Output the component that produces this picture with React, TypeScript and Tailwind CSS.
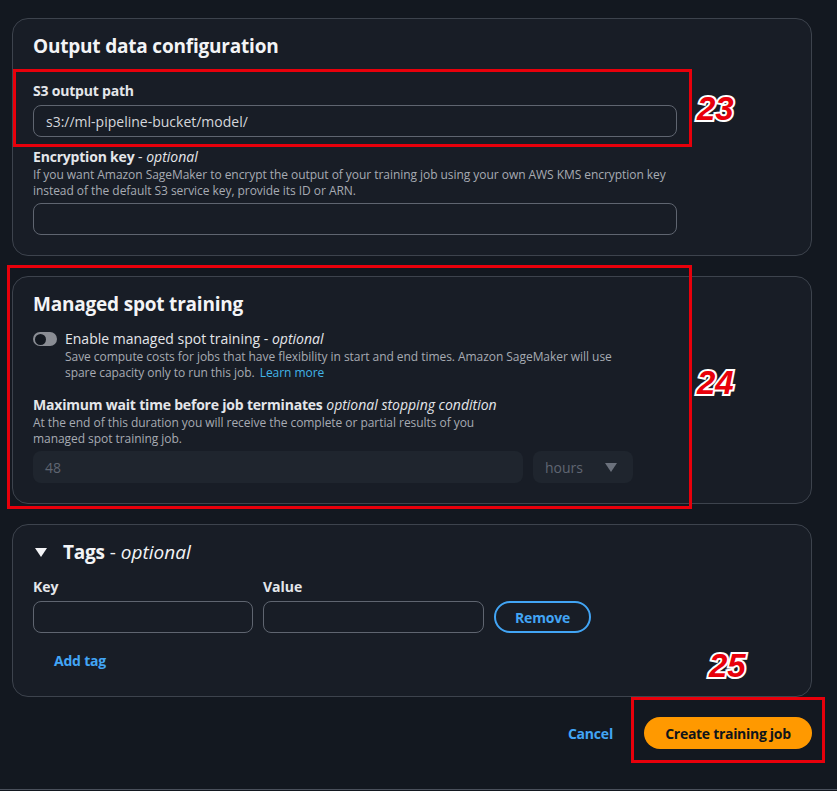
import React from 'react';

const font = "font-['Open_Sans','Liberation_Sans',sans-serif]";

const Card: React.FC<{ children: React.ReactNode; className?: string }> = ({ children, className }) => (
  <div className={`w-[800px] rounded-2xl border border-[#3d434d] bg-[#181d26] px-5 pt-[15px] pb-5 ${className ?? ''}`}>
    {children}
  </div>
);

const TextInput: React.FC<{ value?: string; className?: string }> = ({ value, className }) => (
  <div
    className={`flex h-8 items-center rounded-lg border border-[#5f6570] bg-[#181d26] px-3 text-[14px] text-[#d5d7dc] ${className ?? ''}`}
  >
    {value}
  </div>
);

const Marker: React.FC<{ n: string; className: string }> = ({ n, className }) => (
  <span
    className={`absolute text-[33px] font-bold italic leading-none text-[#e8000b] [-webkit-text-stroke:4px_#ffffff] [paint-order:stroke_fill] font-['Liberation_Sans',sans-serif] ${className}`}
  >
    {n}
  </span>
);

export default function App() {
  return (
    <div className={`relative h-[791px] w-full overflow-hidden bg-[#131820] ${font}`}>
      <div className="flex h-[790px] flex-col gap-5 border-b border-[#4a505b] pl-3 pt-[18px]">
        {/* Output data configuration */}
        <Card>
          <h2 className="text-[19px] font-bold leading-6 tracking-[-0.2px] text-[#f3f4f6]">Output data configuration</h2>
          <div className="mt-[23px] text-[14px] font-bold leading-5 tracking-[-0.2px] text-[#e4e6ea]">S3 output path</div>
          <TextInput value="s3://ml-pipeline-bucket/model/" className="mt-1 w-[644px]" />
          <div className="mt-[10px] text-[14px] leading-5 text-[#e4e6ea]">
            <span className="font-bold tracking-[-0.2px]">Encryption key</span> - <i>optional</i>
          </div>
          <p className="text-[12px] leading-4 tracking-[-0.05px] text-[#a7abb3]">
            If you want Amazon SageMaker to encrypt the output of your training job using your own AWS KMS encryption key
            <br />
            instead of the default S3 service key, provide its ID or ARN.
          </p>
          <TextInput className="mt-1 w-[644px]" />
        </Card>

        {/* Managed spot training */}
        <Card>
          <h2 className="text-[19px] font-bold leading-6 tracking-[-0.2px] text-[#f3f4f6]">Managed spot training</h2>
          <div className="mt-[13px] flex gap-2">
            <div className="mt-[3px] flex h-[14px] w-6 shrink-0 items-center rounded-full bg-[#8a8d94] px-[2px]">
              <div className="h-[11px] w-[11px] rounded-full bg-[#131820]" />
            </div>
            <div>
              <div className="text-[14px] leading-5 text-[#e4e6ea]">
                Enable managed spot training - <i>optional</i>
              </div>
              <p className="text-[12px] leading-4 tracking-[-0.05px] text-[#a7abb3]">
                Save compute costs for jobs that have flexibility in start and end times. Amazon SageMaker will use
                <br />
                spare capacity only to run this job. <span className="ml-0.5 text-[#42b4e8]">Learn more</span>
              </p>
            </div>
          </div>
          <div className="mt-[14px] text-[14px] leading-5 text-[#e4e6ea]">
            <span className="font-bold tracking-[-0.2px]">Maximum wait time before job terminates</span>{' '}
            <i>optional stopping condition</i>
          </div>
          <p className="text-[12px] leading-4 tracking-[-0.05px] text-[#a7abb3]">
            At the end of this duration you will receive the complete or partial results of you
            <br />
            managed spot training job.
          </p>
          <div className="mt-1 flex gap-[10px]">
            <div className="flex h-8 w-[490px] items-center rounded-lg bg-[#1f252e] px-3 text-[14px] text-[#5f6672]">48</div>
            <div className="flex h-8 w-[100px] items-center justify-between rounded-lg bg-[#1f252e] pl-3 pr-4 text-[14px] text-[#5f6672]">
              hours
              <svg width="12" height="9" viewBox="0 0 12 9">
                <path d="M0 0h12L6 9z" fill="#6b717c" />
              </svg>
            </div>
          </div>
        </Card>

        {/* Tags */}
        <Card>
          <div className="flex items-center gap-4 text-[19px] leading-6 text-[#f3f4f6]">
            <svg width="12" height="9" viewBox="0 0 12 9" className="ml-[2px]">
              <path d="M0 0h12L6 9z" fill="#f3f4f6" />
            </svg>
            <div>
              <span className="font-bold tracking-[-0.2px]">Tags</span> - <i>optional</i>
            </div>
          </div>
          <div className="mt-[13px] flex gap-[10px]">
            <div>
              <div className="text-[14px] font-bold leading-5 text-[#e4e6ea]">Key</div>
              <TextInput className="mt-1 w-[220px]" />
            </div>
            <div>
              <div className="text-[14px] font-bold leading-5 text-[#e4e6ea]">Value</div>
              <TextInput className="mt-1 w-[221px]" />
            </div>
            <button className="mt-6 flex h-8 w-[97px] items-center justify-center rounded-full border-2 border-[#42a5f5] text-[14px] font-bold tracking-[-0.2px] text-[#42a5f5]">
              Remove
            </button>
          </div>
          <button className="mt-[11px] flex h-8 items-center pl-[21px] text-[14px] font-bold tracking-[-0.2px] text-[#42a5f5]">
            Add tag
          </button>
        </Card>

        {/* Footer actions */}
        <div className="flex w-[800px] items-center justify-end">
          <button className="mr-[31px] text-[14px] font-bold tracking-[-0.2px] text-[#42a5f5]">Cancel</button>
          <button className="flex h-8 w-[168px] items-center justify-center rounded-full bg-[#ff9900] text-[14px] font-bold tracking-[-0.3px] text-[#0f141a]">
            Create training job
          </button>
        </div>
      </div>

      {/* annotation overlays */}
      <div className="absolute left-[13px] top-[69px] h-[78px] w-[679px] border-[3px] border-[#e8000b]" />
      <div className="absolute left-[7px] top-[265px] h-[244px] w-[685px] border-[3px] border-[#e8000b]" />
      <div className="absolute left-[631px] top-[697px] h-[66px] w-[194px] border-[3px] border-[#e8000b]" />
      <Marker n="23" className="left-[697px] top-[92px]" />
      <Marker n="24" className="left-[697px] top-[366px]" />
      <Marker n="25" className="left-[709px] top-[649px]" />
    </div>
  );
}
